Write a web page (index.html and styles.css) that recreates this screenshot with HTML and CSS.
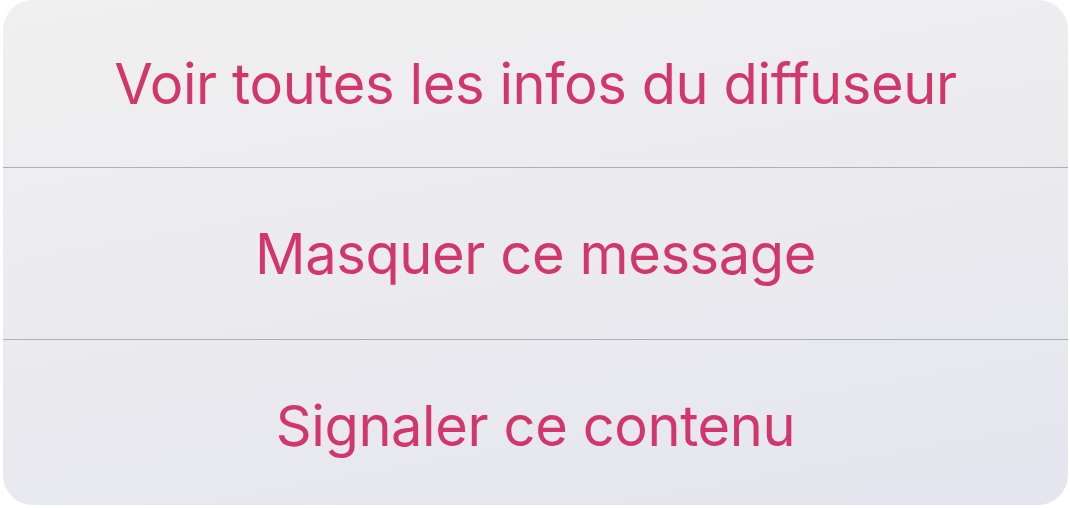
FILE: index.html
```html
<!DOCTYPE html>
<html lang="fr">
<head>
    <meta charset="UTF-8">
    <meta name="viewport" content="width=device-width, initial-scale=1.0">
    <title>Actions</title>
    <link rel="stylesheet" href="styles.css">
</head>
<body>
    <div class="sheet">
        <button class="action first">Voir toutes les infos du diffuseur</button>
        <button class="action middle">Masquer ce message</button>
        <button class="action last">Signaler ce contenu</button>
    </div>
</body>
</html>
```
FILE: styles.css
```css
body {
    margin: 0;
    background-color: #ffffff;
    font-family: 'Inter', 'Roboto', sans-serif;
}

.sheet {
    margin-left: 3px;
    width: 1065px;
    height: 505px;
    border-radius: 30px;
    overflow: hidden;
    display: flex;
    flex-direction: column;
    background: linear-gradient(170deg, #f1f0f0 0%, #ebebee 50%, #e5e5f0 100%);
}

.action {
    display: flex;
    align-items: center;
    justify-content: center;
    border: none;
    background: none;
    font-family: inherit;
    font-size: 56px;
    letter-spacing: -0.4px;
    color: #d1376b;
    padding: 0;
}

.action + .action {
    border-top: 1px solid #b0b0b4;
}

.first {
    height: 167px;
}

.middle {
    height: 172px;
}

.last {
    flex: 1;
    padding-top: 6px;
}
```
